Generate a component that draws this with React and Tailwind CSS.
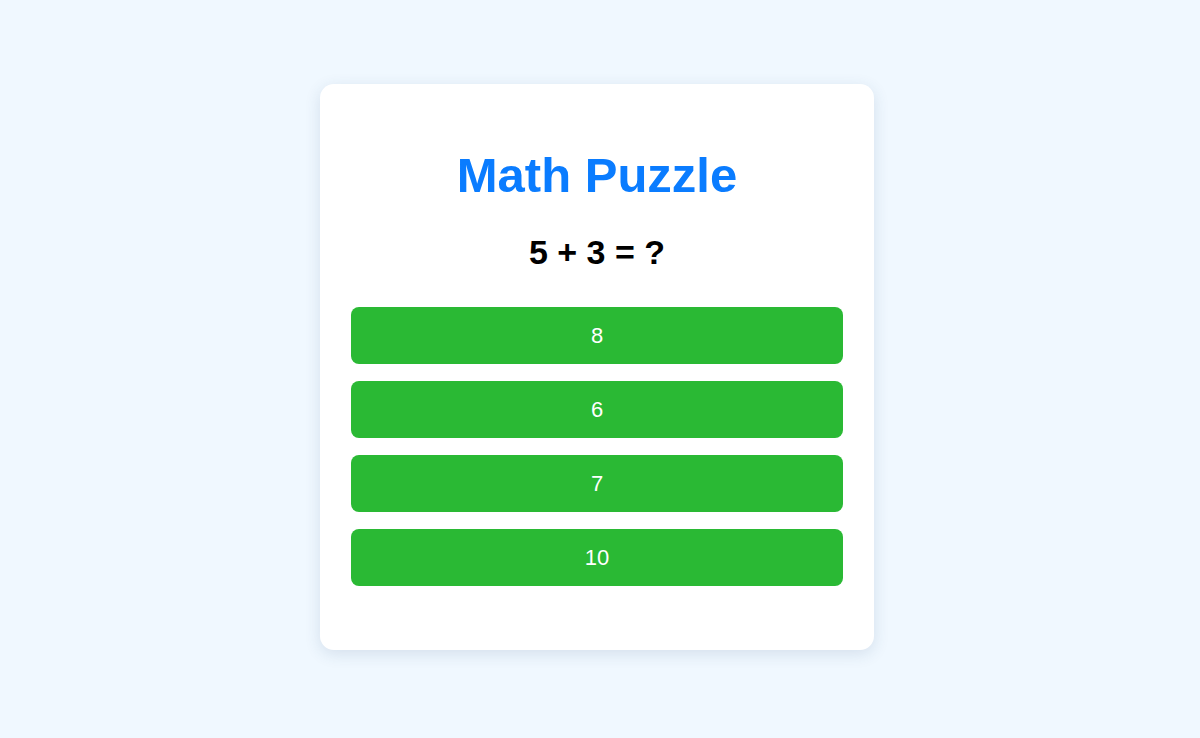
export default function App() {
  const options = ["8", "6", "7", "10"];
  return (
    <div className="min-h-[738px] w-full bg-[#f0f8ff] flex items-center justify-center pr-[6px] pb-[4px]" style={{ fontFamily: '"Liberation Sans", Arial, sans-serif' }}>
      <div className="w-[554px] bg-white rounded-[14px] shadow-[0_4px_16px_rgba(40,80,120,0.14)] px-[31px] pt-[64px] pb-[64px] flex flex-col items-center">
        <h1 className="text-[49px] leading-[55px] font-bold text-[#0a7cff]">Math Puzzle</h1>
        <div className="mt-[30px] text-[34px] leading-[39px] font-bold text-black">5 + 3 = ?</div>
        <div className="mt-[35px] w-full flex flex-col gap-[17px]">
          {options.map((o) => (
            <button key={o} className="w-full h-[57px] rounded-[8px] bg-[#2ab934] text-white text-[22px] flex items-center justify-center">
              {o}
            </button>
          ))}
        </div>
      </div>
    </div>
  );
}
